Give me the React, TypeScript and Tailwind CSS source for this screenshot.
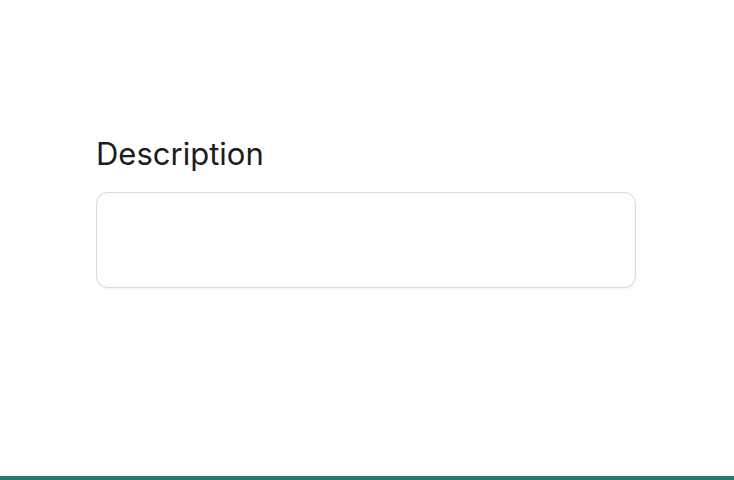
export default function App() {
  return (
    <div className="flex h-[480px] w-full flex-col bg-white font-['Inter',sans-serif]">
      <main className="flex-1 px-24 pt-[134px]">
        <label className="block text-[31px] leading-[40px] font-normal text-[#1c1c1e]">
          Description
        </label>
        <div className="mt-[18px] h-[96px] w-[540px] rounded-xl border border-[#d9d7e0] bg-white shadow-[0_1px_2px_rgba(0,0,0,0.06)]" />
      </main>
      <div className="h-1 w-full bg-[#267a72]" />
    </div>
  );
}
